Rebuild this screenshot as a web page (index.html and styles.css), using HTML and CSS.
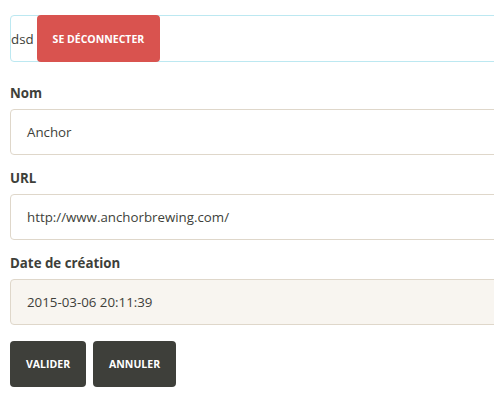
FILE: index.html
```html
<!DOCTYPE html>
<html lang="fr">
<head>
<meta charset="utf-8">
<link rel="stylesheet" href="styles.css">
</head>
<body>
<div class="page">
  <div class="userbar">
    <span class="user">dsd</span>
    <button class="btn btn-danger">Se déconnecter</button>
  </div>
  <form class="form">
    <div class="group">
      <label class="label">Nom</label>
      <div class="input">Anchor</div>
    </div>
    <div class="group">
      <label class="label">URL</label>
      <div class="input">http://www.anchorbrewing.com/</div>
    </div>
    <div class="group">
      <label class="label">Date de création</label>
      <div class="input disabled">2015-03-06 20:11:39</div>
    </div>
    <div class="actions">
      <button type="button" class="btn btn-dark">Valider</button>
      <button type="button" class="btn btn-dark">Annuler</button>
    </div>
  </form>
</div>
</body>
</html>
```

FILE: styles.css
```css
html, body {
  margin: 0;
  padding: 0;
  overflow: hidden;
  background: #fff;
}
body {
  font-family: "Open Sans", "Noto Sans", sans-serif;
  font-size: 13.3px;
  color: #3e3f3a;
}
.page {
  padding: 15px 0 0 10px;
  width: 520px;
}
.userbar {
  display: flex;
  align-items: stretch;
  height: 47px;
  box-sizing: border-box;
  border: 1px solid #bce8f1;
  border-radius: 4px;
}
.user {
  align-self: center;
  margin-right: 3px;
}
.btn {
  border: none;
  border-radius: 4px;
  font-family: inherit;
  font-weight: 700;
  font-size: 10.5px;
  text-transform: uppercase;
  white-space: nowrap;
  color: #fff;
  padding: 0 16px;
  cursor: pointer;
}
.btn-danger {
  background: #d9534f;
  margin: -1px 0;
  padding: 0 16px;
}
.form {
  margin-top: 21px;
}
.group {
  margin-bottom: 13px;
}
.label {
  display: block;
  font-weight: 700;
  margin-bottom: 6px;
  line-height: 20px;
}
.input {
  box-sizing: border-box;
  height: 46px;
  border: 1px solid #dfd7ca;
  border-radius: 4px;
  padding: 0 16px;
  display: flex;
  align-items: center;
  color: #3e3f3a;
}
.input.disabled {
  background: #f8f5f0;
}
.actions {
  display: flex;
  gap: 7px;
  margin-top: 16px;
}
.btn-dark {
  background: #3e3f3a;
  height: 46px;
}
```
